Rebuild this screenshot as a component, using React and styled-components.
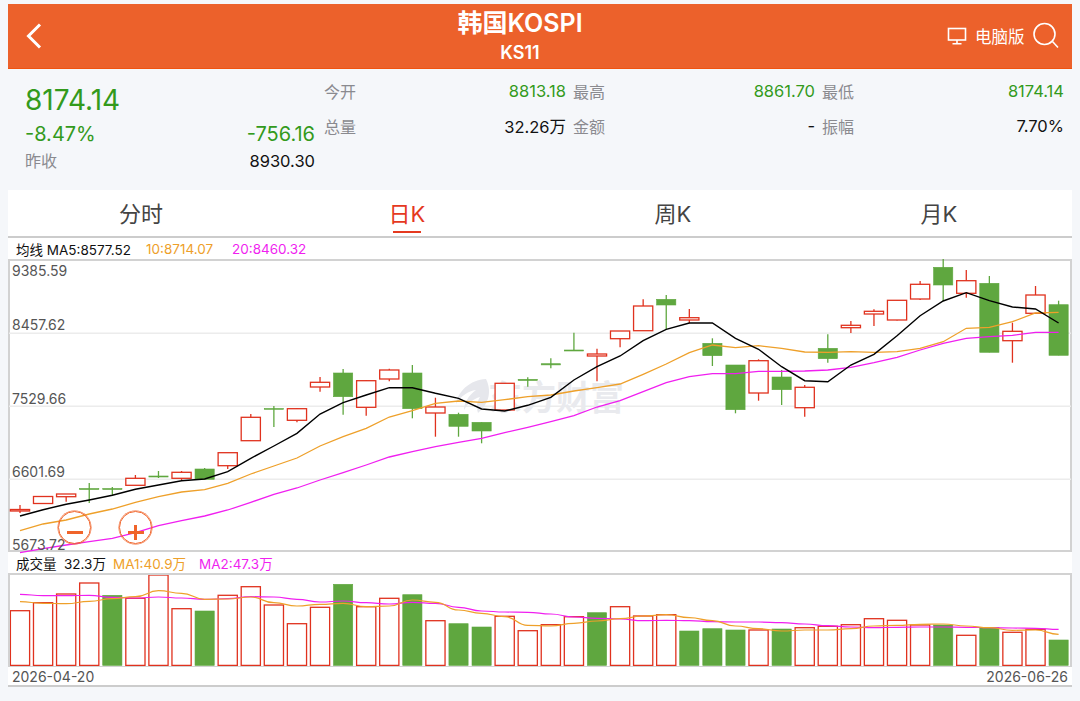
import styled, { createGlobalStyle } from "styled-components";

const GlobalStyle = createGlobalStyle`
  * { box-sizing: border-box; }
  body {
    margin: 0;
    background: #f5f7fa;
    font-family: Inter, "Noto Sans CJK SC", sans-serif;
  }
`;

const RED = "#e0321e";
const GREEN = "#5fa73f";
const ORANGE = "#eea02a";
const MAGENTA = "#f01ff0";

const candleX = (i) => 20 + i * 23.08;

// [涨跌, 实体上, 实体下, 影线上, 影线下]
const candles = [
  ["r", 509.5, 511, 505, 513], ["r", 496.5, 503.5, 496.5, 503.5], ["r", 494, 496.7, 494, 501.7],
  ["g", 488.5, 489.5, 483, 503], ["g", 488.5, 489.5, 487, 495], ["r", 478.3, 485.3, 475, 485.3],
  ["g", 476, 477, 471, 478], ["r", 472.3, 478.3, 471, 480], ["g", 469, 479.3, 468, 479.3],
  ["r", 452.7, 465.7, 452.7, 469], ["r", 417.3, 440.7, 414, 440.7], ["g", 408.5, 409.3, 406, 427],
  ["r", 408.7, 420.3, 408, 422.3], ["r", 382.3, 387, 377, 391.7], ["g", 373, 396.7, 369, 414.7],
  ["r", 380.7, 407.3, 380, 415.7], ["r", 370, 379, 368.7, 381.3], ["g", 373, 408.7, 365, 418.3],
  ["r", 407, 413, 397.7, 436.7], ["g", 414.3, 426.3, 412.7, 436.7], ["g", 422.3, 431, 422.3, 443.3],
  ["r", 383.3, 410, 383.3, 410], ["g", 379.3, 380.5, 377.3, 386.7], ["g", 363.7, 364.9, 358.3, 368.3],
  ["g", 350, 351, 332.7, 351], ["r", 354, 356, 348.7, 381.3], ["r", 331, 338.7, 331, 347.3],
  ["r", 306, 330.7, 299.3, 330.7], ["g", 299.3, 305, 295, 329.3], ["r", 317.7, 320, 309, 323.3],
  ["g", 343.3, 355.7, 338.3, 366], ["g", 365, 409.7, 365, 413.3], ["r", 360.7, 393, 359.3, 400.7],
  ["g", 377, 389.7, 370, 405], ["r", 387.3, 407.7, 385, 416.7], ["g", 348.3, 358.7, 334.3, 362.7],
  ["r", 325.3, 327.7, 321, 333], ["r", 311.3, 314, 309.3, 326], ["r", 300.3, 320, 300, 320.5],
  ["r", 284.3, 299, 281, 300], ["g", 267.3, 285, 259, 301], ["r", 280.7, 293.3, 270, 297.7],
  ["g", 283.3, 352.3, 276, 352.3], ["r", 331.3, 340.7, 322.7, 362.7], ["r", 295, 313.3, 286, 313.3],
  ["g", 304.7, 355.3, 300.7, 355.3],
];

const ma5 = [
  516, 509.7, 504.3, 500, 495.3, 489.3, 485, 480.7, 479, 471.7, 458.3, 446, 433.3, 414, 402.7, 395,
  387.7, 387.7, 393.3, 398.3, 409, 411, 405.3, 397.3, 380, 366.7, 356, 340.7, 329.3, 323, 323, 338.3,
  349.3, 366.7, 380.7, 381.7, 365, 354.3, 335.7, 315.7, 301, 292.7, 300.7, 307, 309, 323,
];
const ma10 = [
  530.7, 524, 520, 514, 509, 502.3, 496.7, 492, 489.7, 483.3, 474, 466, 458, 446, 436.7, 428.3, 417,
  410.7, 403.3, 401, 402.3, 399.7, 396.7, 395, 391, 387.7, 384, 374.3, 364, 352.7, 345, 347.7, 345.7,
  348.3, 352, 352.3, 351.7, 352.3, 351.7, 348.3, 341.7, 328.3, 327.3, 321.7, 313, 312.3,
];
const ma20 = [
  552.7, 548.7, 545, 541.7, 538.3, 532.7, 525.7, 520.7, 516, 510, 502.3, 494.3, 488, 480, 472.7, 465,
  457, 451.7, 446.7, 442.3, 438.3, 432.7, 427.3, 421.7, 415.7, 407, 400.7, 391.7, 382.7, 376.7, 373.7,
  373.7, 371.3, 371.3, 371, 370, 367.3, 362.7, 357.3, 350, 343.3, 338.3, 336.7, 335.3, 332.3, 332.3,
];

const volumes = [
  ["r", 610.7], ["r", 602.7], ["r", 594], ["r", 583], ["g", 595.3], ["r", 598.3], ["r", 575], ["r", 608.7],
  ["g", 611], ["r", 595.3], ["r", 586.7], ["r", 605], ["r", 623.7], ["r", 607.3], ["g", 584.3], ["r", 606.7],
  ["r", 598.3], ["g", 594.7], ["r", 620.7], ["g", 623.7], ["g", 627], ["r", 616.3], ["r", 630.7], ["r", 624.7],
  ["r", 616.7], ["g", 612.7], ["r", 606.7], ["r", 616], ["r", 614.7], ["g", 631], ["g", 628.7], ["g", 630],
  ["r", 630], ["g", 629], ["r", 627.7], ["r", 626.3], ["r", 624.7], ["r", 618.7], ["r", 620.3], ["r", 625],
  ["g", 625], ["r", 635.3], ["g", 627.3], ["r", 632.3], ["r", 629.3], ["g", 640],
];
const volMa1 = [
  601.7, 603.3, 603.7, 601.3, 598.7, 596.7, 590.7, 593.3, 599.3, 599, 597, 602.7, 606, 604.3, 603.3, 606.7,
  606, 600, 602.3, 610, 613.3, 616.7, 625.3, 626, 623.3, 621, 618.7, 616, 614.7, 617.7, 620.7, 626,
  628.7, 631, 630, 630, 628.7, 626, 625.3, 624.3, 624, 626, 627.7, 630.3, 630, 634.3,
];
const volMa2 = [
  594.3, 595.7, 595.7, 595.3, 597.3, 598, 597, 598, 599.3, 598.7, 596.7, 597, 599.3, 602, 601, 602.7,
  604, 602.3, 603.3, 607.3, 611, 612, 612.3, 614, 617, 618.3, 619, 620.7, 620.3, 620.7, 621.7, 622,
  622, 622.7, 624, 625.7, 627, 627.7, 627.3, 627, 627, 627.3, 627.7, 628, 628.3, 629.3,
];

const linePoints = (values) => values.map((y, i) => `${candleX(i)},${y}`).join(" ");

const smoothPath = (values) => {
  const pts = values.map((y, i) => [candleX(i), y]);
  let d = `M${pts[0][0]} ${pts[0][1]}`;
  for (let i = 1; i < pts.length; i++) {
    const midX = (pts[i - 1][0] + pts[i][0]) / 2;
    d += ` C${midX} ${pts[i - 1][1]} ${midX} ${pts[i][1]} ${pts[i][0]} ${pts[i][1]}`;
  }
  return d;
};

const stats = [
  { label: "今开", value: "8813.18", tone: "down" },
  { label: "最高", value: "8861.70", tone: "down" },
  { label: "最低", value: "8174.14", tone: "down" },
  { label: "总量", value: "32.26万" },
  { label: "金额", value: "-" },
  { label: "振幅", value: "7.70%" },
];

const tabs = ["分时", "日K", "周K", "月K"];

export default function App() {
  return (
    <Page>
      <GlobalStyle />
      <Header>
        <BackButton aria-label="返回">
          <svg width="18" height="28" viewBox="0 0 18 28" fill="none">
            <path d="M15 2.5 3.5 14 15 25.5" stroke="#fff" strokeWidth="3" />
          </svg>
        </BackButton>
        <TitleBlock>
          <Title>韩国KOSPI</Title>
          <SubTitle>KS11</SubTitle>
        </TitleBlock>
        <Actions>
          <svg width="20" height="18" viewBox="0 0 20 18" fill="none" stroke="#fff" strokeWidth="1.6">
            <rect x="1.5" y="1.5" width="17" height="11.5" />
            <path d="M10 13v3.5M5.5 16.8h9" />
          </svg>
          <PcLink>电脑版</PcLink>
          <svg width="28" height="28" viewBox="0 0 28 28" fill="none" stroke="#fff" strokeWidth="1.6">
            <circle cx="12.5" cy="12" r="10.5" />
            <path d="M20.5 19.5 26 25.5" />
          </svg>
        </Actions>
      </Header>

      <Info>
        <Quote>
          <LastPrice>8174.14</LastPrice>
          <ChangeRow>
            <span>-8.47%</span>
            <span>-756.16</span>
          </ChangeRow>
          <PrevRow>
            <Label>昨收</Label>
            <Value>8930.30</Value>
          </PrevRow>
        </Quote>
        <Stats>
          {stats.map((s) => (
            <Stat key={s.label}>
              <Label>{s.label}</Label>
              <Value $tone={s.tone}>{s.value}</Value>
            </Stat>
          ))}
        </Stats>
      </Info>

      <Tabs>
        {tabs.map((t) => (
          <Tab key={t} $active={t === "日K"}>
            {t}
          </Tab>
        ))}
      </Tabs>

      <Legend>
        <LegendItem $width={130}>均线 MA5:8577.52</LegendItem>
        <LegendItem $width={86} $color={ORANGE}>10:8714.07</LegendItem>
        <LegendItem $color={MAGENTA}>20:8460.32</LegendItem>
      </Legend>

      <PriceBox>
        <svg width="100%" height="100%" viewBox="10 261 1060 289">
          {[333.3, 406.3, 479.3].map((y) => (
            <line key={y} x1="9" x2="1071" y1={y} y2={y} stroke="#ececec" strokeWidth="1.4" />
          ))}
          <Watermark />
          {candles.map(([dir, top, bottom, high, low], i) => {
            const x = candleX(i);
            const color = dir === "r" ? RED : GREEN;
            return (
              <g key={i}>
                <line x1={x} x2={x} y1={high} y2={low} stroke={color} strokeWidth="1.3" />
                <rect
                  x={x - 9.6}
                  y={top}
                  width={19.2}
                  height={bottom - top}
                  fill={dir === "r" ? "#fff" : GREEN}
                  stroke={color}
                  strokeWidth={dir === "r" ? 1.3 : 0.6}
                />
              </g>
            );
          })}
          <polyline points={linePoints(ma10)} fill="none" stroke={ORANGE} strokeWidth="1.3" />
          <polyline points={linePoints(ma20)} fill="none" stroke={MAGENTA} strokeWidth="1.3" />
          <polyline points={linePoints(ma5)} fill="none" stroke="#000" strokeWidth="1.4" />
          <AxisText x="12" y="276">9385.59</AxisText>
          <AxisText x="12" y="330">8457.62</AxisText>
          <AxisText x="12" y="404">7529.66</AxisText>
          <AxisText x="12" y="477">6601.69</AxisText>
          <AxisText x="12" y="549.5">5673.72</AxisText>
        </svg>
        <ZoomOut aria-label="缩小" />
        <ZoomIn aria-label="放大" />
      </PriceBox>

      <Legend>
        <LegendItem $width={48}>成交量</LegendItem>
        <LegendItem $width={49}>32.3万</LegendItem>
        <LegendItem $width={86} $color={ORANGE}>MA1:40.9万</LegendItem>
        <LegendItem $color={MAGENTA}>MA2:47.3万</LegendItem>
      </Legend>

      <VolumeBox>
        <svg width="100%" height="100%" viewBox="10 575 1060 91">
          {volumes.map(([dir, top], i) => (
            <rect
              key={i}
              x={candleX(i) - 9.6}
              y={top}
              width={19.2}
              height={665.4 - top}
              fill={dir === "r" ? "#fff" : GREEN}
              stroke={dir === "r" ? RED : GREEN}
              strokeWidth={dir === "r" ? 1.3 : 0.6}
            />
          ))}
          <path d={smoothPath(volMa2)} fill="none" stroke={MAGENTA} strokeWidth="1.2" />
          <path d={smoothPath(volMa1)} fill="none" stroke={ORANGE} strokeWidth="1.2" />
        </svg>
      </VolumeBox>
      <DateRow>
        <span>2026-04-20</span>
        <span>2026-06-26</span>
      </DateRow>
    </Page>
  );
}

function Watermark() {
  return (
    <g>
      <path
        d="M486 379c-16 1-28 12-30 25 5-8 12-13 20-14-8 6-12 13-12 20 4-7 9-11 16-13-3 5-4 9-2 16 9-7 15-20 8-34z"
        fill="#e6e7ec"
      />
      <WatermarkText x="488" y="410">东方财富</WatermarkText>
    </g>
  );
}

const Page = styled.div`
  width: 1064px;
  margin: 0 8px;
  padding: 4px 0 14px;
`;

const Header = styled.header`
  height: 65px;
  display: grid;
  grid-template-columns: 84px 1fr 124px;
  align-items: center;
  background: #ec612b;
  border-bottom: 1px solid #f0530f;
  color: #fff;
`;

const BackButton = styled.button`
  display: flex;
  width: 40px;
  padding: 0 0 0 17px;
  border: 0;
  background: none;
`;

const TitleBlock = styled.div`
  display: flex;
  flex-direction: column;
  align-items: center;
  font-weight: 600;
`;

const Title = styled.div`
  font-size: 25px;
  line-height: 30px;
`;

const SubTitle = styled.div`
  font-size: 18px;
  line-height: 24px;
  margin-top: 3px;
`;

const Actions = styled.div`
  display: flex;
  align-items: center;
  gap: 8px;
  margin-left: -1px;
`;

const PcLink = styled.span`
  font-size: 16.5px;
  margin-right: -1px;
`;

const Info = styled.section`
  height: 121px;
  display: flex;
  padding: 13px 8px 0 17px;
`;

const Quote = styled.div`
  width: 290px;
  flex: none;
`;

const LastPrice = styled.div`
  font-size: 28px;
  line-height: 36px;
  color: #339a1c;
`;

const ChangeRow = styled.div`
  display: flex;
  justify-content: space-between;
  margin-top: 1px;
  font-size: 20px;
  line-height: 30px;
  color: #339a1c;
`;

const PrevRow = styled.div`
  display: flex;
  justify-content: space-between;
  align-items: center;
  line-height: 24px;
`;

const Stats = styled.div`
  flex: 1;
  margin-left: 9px;
  margin-top: -2px;
  display: grid;
  grid-template-columns: repeat(3, 1fr);
  grid-auto-rows: 35px;
  column-gap: 7px;
  align-content: start;
`;

const Stat = styled.div`
  display: flex;
  justify-content: space-between;
  align-items: center;
  height: 22px;
`;

const Label = styled.span`
  font-size: 16px;
  color: #8a8a8f;
`;

const Value = styled.span`
  font-size: 16.5px;
  color: ${(p) => (p.$tone === "down" ? "#339a1c" : "#111")};
`;

const Tabs = styled.nav`
  height: 48px;
  display: grid;
  grid-template-columns: repeat(4, 1fr);
  background: #fff;
  border-bottom: 2px solid #ccc;
`;

const Tab = styled.div`
  position: relative;
  display: flex;
  justify-content: center;
  padding-top: 10px;
  font-size: 22px;
  line-height: 28px;
  color: ${(p) => (p.$active ? "#e5391f" : "#444")};

  &::after {
    content: "";
    display: ${(p) => (p.$active ? "block" : "none")};
    position: absolute;
    bottom: 3px;
    left: calc(50% - 14px);
    width: 28px;
    height: 2.5px;
    background: #e5391f;
  }
`;

const Legend = styled.div`
  height: 21px;
  display: flex;
  align-items: center;
  padding-left: 8px;
  background: #fff;
  font-size: 13.5px;
`;

const LegendItem = styled.span`
  width: ${(p) => (p.$width ? `${p.$width}px` : "auto")};
  flex: none;
  color: ${(p) => p.$color || "#111"};
  white-space: nowrap;
`;

const PriceBox = styled.div`
  position: relative;
  height: 293px;
  background: #fff;
  border: 2px solid #d2d2d2;

  svg {
    display: block;
    overflow: visible;
  }
`;

const ZoomButton = styled.button`
  position: absolute;
  top: 250px;
  width: 33px;
  height: 33px;
  padding: 0;
  border: 1px solid #f0642a;
  border-radius: 50%;
  box-shadow: 0 0 0 0.5px #f0642a;
  background: none;

  &::before {
    content: "";
    position: absolute;
    left: 7.5px;
    right: 7.5px;
    top: 18.5px;
    height: 3px;
    background: #f0642a;
  }
`;

const ZoomOut = styled(ZoomButton)`
  left: 48px;
`;

const ZoomIn = styled(ZoomButton)`
  left: 109px;

  &::after {
    content: "";
    position: absolute;
    top: 12.5px;
    height: 15px;
    left: 14px;
    width: 3px;
    background: #f0642a;
  }
`;

const AxisText = styled.text`
  font-size: 14px;
  fill: #555;
`;

const WatermarkText = styled.text`
  font-size: 34px;
  font-weight: 700;
  fill: #e9eaee;
`;

const VolumeBox = styled.div`
  height: 94px;
  background: #fff;
  border: 2px solid #d2d2d2;
  border-bottom-width: 1px;

  svg {
    display: block;
  }
`;

const DateRow = styled.div`
  height: 20px;
  display: flex;
  justify-content: space-between;
  align-items: center;
  padding: 0 4px;
  background: #fff;
  border-bottom: 2px solid #ccc;
  font-size: 14px;
  color: #555;
`;
